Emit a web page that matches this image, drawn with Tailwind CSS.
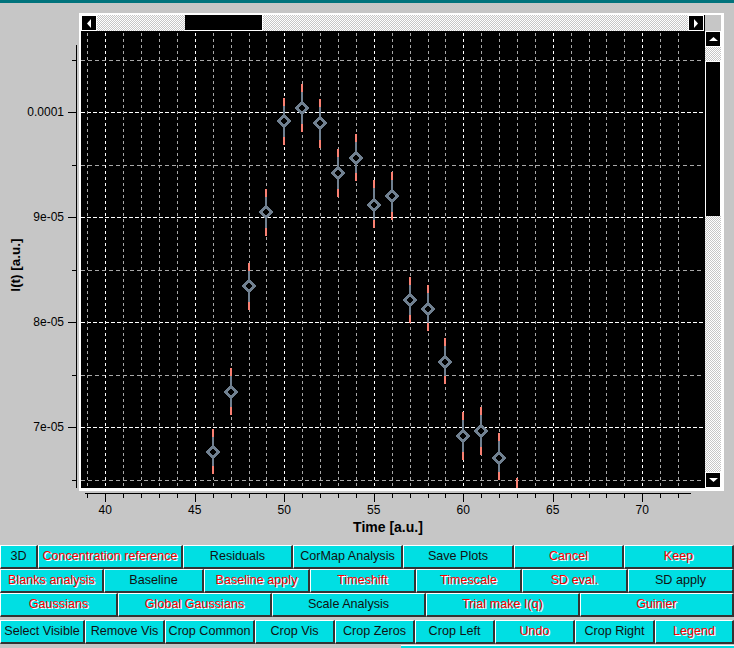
<!DOCTYPE html>
<html lang="en">
<head>
  <meta charset="UTF-8" />
  <title>Plot window</title>
  <script src="https://cdn.jsdelivr.net/npm/@tailwindcss/browser@4"></script>
</head>
<body class="bg-[#c6c6c6] w-[734px] h-[648px] overflow-hidden font-['Liberation_Sans',sans-serif] text-black">

  <div class="h-[3px] bg-[#00737c]"></div>

  <!-- Plot area -->
  <div class="relative h-[542px] pt-[10px] pl-[79px]">
    <div class="w-[645px] h-[478px] bg-white pt-[2px] pl-[2px] pr-[3px] pb-[3px] flex flex-col">
      <div class="flex h-[16px]">
        <div class="w-[623px] flex">
          <div class="w-[16px] bg-black border border-white flex items-center justify-center"><svg width="6" height="9"><path d="M5 0V9L1 4.5Z" fill="#fff"/></svg></div>
          <div class="w-[88px] bg-[repeating-conic-gradient(#c6c6c6_0_25%,#fff_0_50%)] bg-[length:2px_2px]"></div>
          <div class="w-[78px] bg-black border-b border-r border-white"></div>
          <div class="flex-1 bg-[repeating-conic-gradient(#c6c6c6_0_25%,#fff_0_50%)] bg-[length:2px_2px]"></div>
          <div class="w-[16px] bg-black border border-white flex items-center justify-center"><svg width="6" height="9"><path d="M1 0V9L5 4.5Z" fill="#fff"/></svg></div>
        </div>
        <div class="w-[1px] bg-black"></div>
        <div class="flex-1 bg-[#c6c6c6]"></div>
      </div>
      <div class="flex flex-1">
        <div class="w-[623px] bg-black"></div>
        <div class="w-[1px] bg-black"></div>
        <div class="flex-1 flex flex-col bg-black">
          <div class="h-[16px] bg-black border border-white flex items-center justify-center"><svg width="9" height="6"><path d="M0 5H9L4.5 1Z" fill="#fff"/></svg></div>
          <div class="h-[14px] bg-[repeating-conic-gradient(#c6c6c6_0_25%,#fff_0_50%)] bg-[length:2px_2px]"></div>
          <div class="h-[155px] bg-black border-x border-t border-white"></div>
          <div class="flex-1 bg-[repeating-conic-gradient(#c6c6c6_0_25%,#fff_0_50%)] bg-[length:2px_2px]"></div>
          <div class="h-[16px] bg-black border border-white flex items-center justify-center"><svg width="9" height="6"><path d="M0 1H9L4.5 5Z" fill="#fff"/></svg></div>
        </div>
      </div>
    </div>
    <svg id="chart" class="absolute left-0 top-[-3px]" width="734" height="545" shape-rendering="crispEdges"></svg>
  </div>

  <!-- Button rows -->
  <div id="rows" class="flex flex-col"></div>
  <div class="mt-[1px] ml-[401px] h-[3px] bg-[#00dfe3] border-t border-white"></div>

  <script>
    const xPos = v => 105.3 + 17.9 * (v - 40);
    const yPos = [60, 112, 165, 217, 270, 322, 375, 427, 480];

    // value, y, err low, err high
    const points = [
      [46, 452, 429, 474], [47, 392, 368, 415], [48, 286, 263, 310], [49, 212, 189, 236],
      [50, 121, 98, 145], [51, 108, 84, 132], [52, 123, 99, 148], [53, 173, 149, 197],
      [54, 158, 134, 181], [55, 205, 180, 228], [56, 196, 172, 220], [57, 300, 277, 323],
      [58, 309, 285, 331], [59, 362, 338, 384], [60, 436, 412, 460], [61, 431, 407, 455],
      [62, 458, 433, 480],
    ];

    let out = '';
    const line = (x1, y1, x2, y2, color, extra = '') =>
      `<line x1="${x1}" y1="${y1}" x2="${x2}" y2="${y2}" stroke="${color}" stroke-width="1" ${extra}/>`;

    // grid
    yPos.forEach((y, i) => {
      const major = i % 2 === 1;
      out += line(81, y + .5, 703, y + .5, major ? '#fff' : '#a8a8a8', major ? 'stroke-dasharray="4 2"' : 'stroke-dasharray="4 3"');
      out += line(major ? 68 : 72, y + .5, 76, y + .5, '#000');
    });
    for (let v = 39; v <= 72; v++) {
      const x = Math.round(xPos(v)) + .5;
      const major = v % 5 === 0;
      out += line(x, 33, x, 488, major ? '#fff' : '#a8a8a8', 'stroke-dasharray="3 3"');
      out += line(x, 493, x, major ? 502 : 498, '#000');
    }

    // axes
    out += line(76.5, 45, 76.5, 488, '#000');
    out += line(85, 493.5, 691, 493.5, '#000');

    // labels
    [['0.0001', 112], ['9e-05', 217], ['8e-05', 322], ['7e-05', 427]].forEach(([t, y]) => {
      out += `<text x="64" y="${y + 4}" text-anchor="end" font-size="12">${t}</text>`;
    });
    for (let v = 40; v <= 70; v += 5) {
      out += `<text x="${xPos(v)}" y="514" text-anchor="middle" font-size="12">${v}</text>`;
    }
    out += `<text x="388" y="532" text-anchor="middle" font-size="14" font-weight="bold">Time [a.u.]</text>`;
    out += `<text transform="translate(20 265) rotate(-90)" text-anchor="middle" font-size="13.5" font-weight="bold">I(t) [a.u.]</text>`;

    // points with error bars
    points.forEach(([v, y, lo, hi]) => {
      const x = Math.round(xPos(v));
      out += `<rect x="${x - 1}" y="${lo}" width="2" height="${hi - lo}" fill="#fa8072"/>`;
      out += `<rect x="${x - 1}" y="${lo + 8}" width="2" height="${hi - lo - 16}" fill="#708090"/>`;
      out += `<path d="M${x} ${y - 5.5}L${x + 5.5} ${y}L${x} ${y + 5.5}L${x - 5.5} ${y}Z" fill="#000" stroke="#708090" stroke-width="2.5"/>`;
    });
    out += `<rect x="${Math.round(xPos(63)) - 1}" y="478" width="2" height="10" fill="#fa8072"/>`;
    document.getElementById('chart').innerHTML = out;

    const rows = [
      { cols: 'grid-cols-[38px_145px_110px_110px_111px_110px_1fr]', mt: 'mt-0', items: [['3D'], ['Concentration reference', 1], ['Residuals'], ['CorMap Analysis'], ['Save Plots'], ['Cancel', 1], ['Keep', 1]] },
      { cols: 'grid-cols-[104px_100px_106px_106px_106px_106px_1fr]', mt: 'mt-0', items: [['Blanks analysis', 1], ['Baseline'], ['Baseline apply', 1], ['Timeshift', 1], ['Timescale', 1], ['SD eval.', 1], ['SD apply']] },
      { cols: 'grid-cols-[118px_154px_154px_154px_154px_1fr]', mt: 'mt-0', items: [['Gaussians', 1], ['Global Gaussians', 1], ['Scale Analysis'], ['Trial make I(q)', 1], ['Guinier', 1]] },
      { cols: 'grid-cols-[85px_80px_90px_80px_80px_80px_80px_80px_1fr]', mt: 'mt-[3px]', items: [['Select Visible'], ['Remove Vis'], ['Crop Common'], ['Crop Vis'], ['Crop Zeros'], ['Crop Left'], ['Undo', 1], ['Crop Right'], ['Legend', 1]] },
    ];

    const rowsEl = document.getElementById('rows');
    rows.forEach(row => {
      const rowEl = document.createElement('div');
      rowEl.className = `grid h-[24px] ${row.cols} ${row.mt}`;
      row.items.forEach(([label, red]) => {
        const btn = document.createElement('button');
        btn.className = 'bg-[#00dfe3] border-t border-l border-white border-r-2 border-b-2 border-r-[#333] border-b-[#333] text-[12.6px] whitespace-nowrap overflow-hidden '
          + (red ? 'text-[#ff0000] [text-shadow:1px_1px_0_#fff]' : 'text-[#111]');
        btn.textContent = label;
        rowEl.appendChild(btn);
      });
      rowsEl.appendChild(rowEl);
    });
  </script>
</body>
</html>
